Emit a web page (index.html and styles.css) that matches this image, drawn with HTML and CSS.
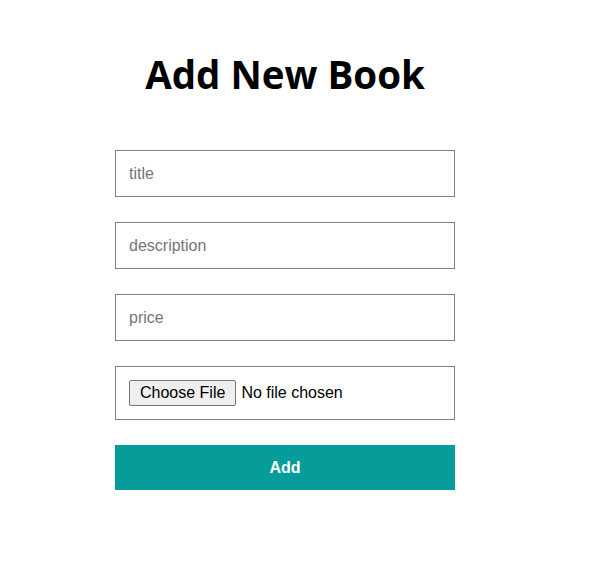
FILE: index.html
```html
<!DOCTYPE html>
<html>
<head>
<meta charset="utf-8">
<link rel="stylesheet" href="styles.css">
</head>
<body>
<div class="page">
  <h1 class="title">Add New Book</h1>
  <form class="form">
    <input class="field" type="text" placeholder="title">
    <input class="field" type="text" placeholder="description">
    <input class="field" type="text" placeholder="price">
    <div class="file-box"><input class="file" type="file"></div>
    <button class="add" type="button">Add</button>
  </form>
</div>
</body>
</html>
```
FILE: styles.css
```css
html, body {
  margin: 0;
  padding: 0;
  background: #fff;
}
.page {
  width: 340px;
  margin-left: 115px;
  padding-top: 48px;
  font-family: "Liberation Sans", Arial, sans-serif;
}
.title {
  margin: 0 0 50px 0;
  text-align: center;
  font-family: "Open Sans", "Noto Sans", sans-serif;
  font-weight: 700;
  font-size: 38.5px;
  line-height: 52px;
  color: #000;
}
.form {
  display: flex;
  flex-direction: column;
  gap: 25px;
}
.field {
  box-sizing: border-box;
  height: 47px;
  width: 340px;
  margin: 0;
  border: 1px solid #808080;
  padding: 0 13px;
  font-family: "Liberation Sans", Arial, sans-serif;
  font-size: 16px;
  color: #000;
  outline: none;
}
.field::placeholder {
  color: #757575;
}
.file-box {
  box-sizing: border-box;
  height: 54px;
  border: 1px solid #808080;
  padding: 0 13px;
  display: flex;
  align-items: center;
}
.file {
  font-family: "Liberation Sans", Arial, sans-serif;
  font-size: 16px;
}
.file::file-selector-button {
  font-family: "Liberation Sans", Arial, sans-serif;
  font-size: 16px;
  padding: 3px 10px;
  margin-right: 5px;
  border: 1px solid #767676;
  border-radius: 2px;
  background: #efefef;
  color: #000;
}
.add {
  height: 45px;
  border: none;
  background: #069c9a;
  color: #fff;
  font-family: "Liberation Sans", Arial, sans-serif;
  font-weight: 700;
  font-size: 16px;
  cursor: pointer;
}
```
